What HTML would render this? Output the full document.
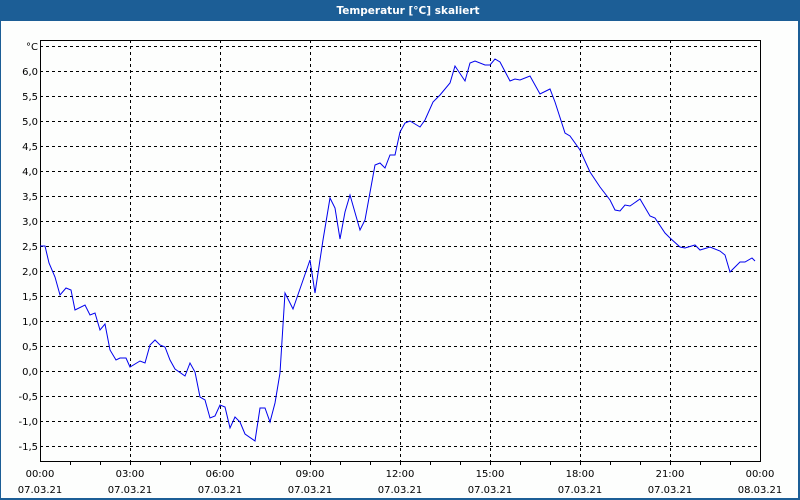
<!DOCTYPE html>
<html><head><meta charset="utf-8"><style>
html,body{margin:0;padding:0;background:#fff}
svg{display:block}
text{font-family:"DejaVu Sans","Liberation Sans",sans-serif;font-size:10px;fill:#000}
</style></head><body>
<svg width="800" height="500" viewBox="0 0 800 500" xmlns="http://www.w3.org/2000/svg">
<rect x="0" y="0" width="800" height="500" fill="#1c5e96"/>
<rect x="1" y="21" width="797" height="477" fill="#fdfefd"/>
<text x="408" y="14" text-anchor="middle" style="fill:#fff;font-weight:bold;font-size:10.5px">Temperatur [°C] skaliert</text>
<g stroke="#000" stroke-width="1" stroke-dasharray="3,3" fill="none" shape-rendering="crispEdges">
<path d="M40 46.5H760M40 71.5H760M40 96.5H760M40 121.5H760M40 146.5H760M40 171.5H760M40 196.5H760M40 221.5H760M40 246.5H760M40 271.5H760M40 296.5H760M40 321.5H760M40 346.5H760M40 371.5H760M40 396.5H760M40 421.5H760M40 446.5H760"/>
<path d="M130.5 40V461M220.5 40V461M310.5 40V461M400.5 40V461M490.5 40V461M580.5 40V461M670.5 40V461"/>
</g>
<g stroke="#000" stroke-width="1" fill="none" shape-rendering="crispEdges">
<rect x="40.5" y="40.5" width="720" height="421"/>
<path d="M70.5 461v4M100.5 461v4M130.5 461v4M160.5 461v4M190.5 461v4M220.5 461v4M250.5 461v4M280.5 461v4M310.5 461v4M340.5 461v4M370.5 461v4M400.5 461v4M430.5 461v4M460.5 461v4M490.5 461v4M520.5 461v4M550.5 461v4M580.5 461v4M610.5 461v4M640.5 461v4M670.5 461v4M700.5 461v4M730.5 461v4"/>
</g>
<g text-anchor="end">
<text x="38" y="50">°C</text>
<text x="38" y="75">6,0</text><text x="38" y="100">5,5</text><text x="38" y="125">5,0</text><text x="38" y="150">4,5</text>
<text x="38" y="175">4,0</text><text x="38" y="200">3,5</text><text x="38" y="225">3,0</text><text x="38" y="250">2,5</text>
<text x="38" y="275">2,0</text><text x="38" y="300">1,5</text><text x="38" y="325">1,0</text><text x="38" y="350">0,5</text>
<text x="38" y="375">0,0</text><text x="38" y="400">-0,5</text><text x="38" y="425">-1,0</text><text x="38" y="450">-1,5</text>
</g>
<g text-anchor="middle">
<text x="40" y="477">00:00</text><text x="130" y="477">03:00</text><text x="220" y="477">06:00</text><text x="310" y="477">09:00</text><text x="400" y="477">12:00</text><text x="490" y="477">15:00</text><text x="580" y="477">18:00</text><text x="670" y="477">21:00</text><text x="760" y="477">00:00</text>
<text x="40" y="493">07.03.21</text><text x="130" y="493">07.03.21</text><text x="220" y="493">07.03.21</text><text x="310" y="493">07.03.21</text><text x="400" y="493">07.03.21</text><text x="490" y="493">07.03.21</text><text x="580" y="493">07.03.21</text><text x="670" y="493">07.03.21</text><text x="760" y="493">08.03.21</text>
</g>
<polyline fill="none" stroke="#0000ee" stroke-width="1" points="40,246 45,246 49,263 55,277 60,295 66,288 71,290 75,310 85,305 90,315 95,313 100,330 105,324 110,350 116,360 120,358 126,358 130,367 140,361 145,363 150,345 155,340 160,345 165,347 170,360 175,369 185,376 190,363 195,372 200,397 205,400 210,418 215,416 220,405 225,407 230,428 235,417 240,422 245,434 255,441 260,408 265,408 270,422 275,403 280,373 285,293 293,309 310,260 315,293 323,240 330,198 335,208 340,239 345,212 350,195 360,230 365,220 375,165 380,163 385,168 390,155 395,155 400,132 405,123 410,121 420,127 425,120 433,102 440,95 450,83 455,66 465,81 470,63 475,61 485,65 490,65 495,59 500,62 510,81 515,79 520,80 530,76 540,94 550,89 555,102 565,133 570,136 580,150 590,172 600,187 610,200 615,210 620,211 625,205 630,206 640,199 650,216 655,218 665,233 670,238 680,247 685,248 695,245 700,250 710,247 720,251 725,255 730,272 740,262 745,262 752,258 755,261"/>
</svg>
</body></html>
